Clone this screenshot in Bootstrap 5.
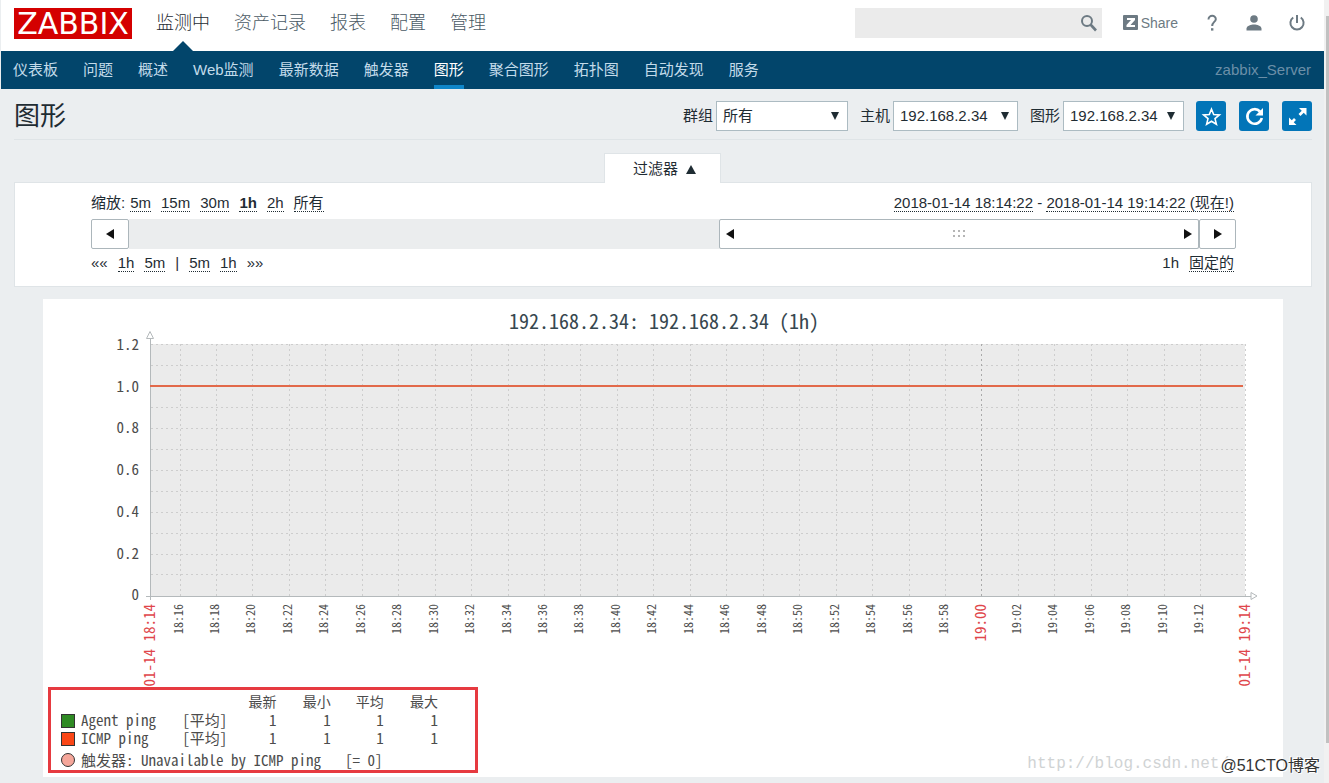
<!DOCTYPE html>
<html lang="zh-CN">
<head>
<meta charset="utf-8">
<meta name="viewport" content="width=device-width, initial-scale=1">
<title>图形</title>
<link rel="stylesheet" href="https://cdn.jsdelivr.net/npm/bootstrap@5.3.0/dist/css/bootstrap.min.css">
<style>
  body { background: #ebeef0; color: #1f2c33; font: 15px/22px "Liberation Sans", "Noto Sans CJK SC", sans-serif; }
  a { color: inherit; text-decoration: none; }
  .z-page { padding-left: 1px; }
  .z-top { height: 51px; padding: 0 18px 0 13px; }
  .z-logo { background: #d40000; color: #fff; font: 30px/31px "DejaVu Sans", sans-serif; width: 118px; height: 31px; margin: 8px 24px 12px 0; text-align: center; }
  .z-main { gap: 24px; font-size: 18px; font-weight: 300; color: #4a5964; height: 51px; line-height: 46px; }
  .z-main .on { color: #1f2c33; position: relative; }
  .z-main .on::after { content: ""; position: absolute; bottom: 0; left: 50%; margin-left: -10px; border: 10px solid transparent; border-top: 0; border-bottom-color: #02456b; }
  .z-search { background: #ebebeb; width: 247px; height: 30px; margin-bottom: 5px; }
  .z-search input { background: none; border: 0; outline: 0; min-width: 0; padding: 0 8px; }
  .z-tools { color: #6d7a83; margin-bottom: 6px; }
  .z-tools svg, .z-search svg { display: block; }
  .z-share { font-size: 14px; gap: 3px; margin: 0 26px 0 21px; }
  .z-icons { gap: 25px; }
  .z-sub { background: #02456b; color: #c3dbea; height: 38px; padding: 0 13px 0 12px; line-height: 38px; }
  .z-sub nav { gap: 25px; }
  .z-sub .on { color: #fff; box-shadow: inset 0 -4px #0f86c9; }
  .z-sub .who { color: #6b8fa8; }
  .z-head { height: 51px; margin: 0 12px 0 13px; border-bottom: 1px solid #dfe4e7; padding-bottom: 4px; padding-top: 8px; }
  .z-head h1 { font-size: 26px; line-height: 38px; font-weight: 400; margin: 0; }
  .z-ctl, .z-acts { gap: 12px; }
  .z-acts { gap: 13px; }
  .z-ctl label { margin-right: 3px; }
  .z-ctl select { appearance: none; height: 30px; border: 1px solid #acbbc2; background: #fff url("data:image/svg+xml,%3Csvg xmlns='http://www.w3.org/2000/svg' width='8' height='8'%3E%3Cpath d='M0 0h8L4 8z' fill='%231f2c33'/%3E%3C/svg%3E") no-repeat right 8px top 10px; padding: 0 6px; color: inherit; border-radius: 0; }
  .w-a { width: 132px; } .w-b { width: 125px; } .w-c { width: 121px; }
  .z-btn { width: 30px; height: 30px; border: 0; border-radius: 3px; background: #0275b8; padding: 0; color: #fff; }
  .z-btn svg { display: block; }
  .z-tab { background: #fff; border: 1px solid #dfe4e7; border-bottom: 0; width: 117px; height: 30px; margin: 13px auto -1px; position: relative; padding: 0 0 0 4px; color: inherit; gap: 8px; }
  .z-filter { background: #fff; border: 1px solid #dfe4e7; margin: 0 12px 0 13px; padding: 9px 75px 12px 76px; }
  .z-links { padding-right: 2px; }
  .z-links a { border-bottom: 1px dotted #1f2c33; }
  .z-links div { white-space: nowrap; }
  .z-links a + a, .z-gap { margin-left: 10px; }
  .z-zoom { margin-right: 5px; }
  .z-slide { height: 30px; margin: 5px 0 3px; }
  .z-slide button { border: 1px solid #acb6bb; border-radius: 2px; background: #fff; padding: 0; width: 38px; }
  .z-slide svg { display: block; }
  .z-slide button:last-child { width: 37px; }
  .z-track { background: #ebedee; }
  .z-thumb { background: #fff; border: 1px solid #acb6bb; border-radius: 2px; padding: 0 6px; }
  .z-chart { background: #fff; margin: 12px 41px 6px 42px; padding-bottom: 4px; }
  .z-chart text, .z-legend { font-family: "Noto Sans Mono CJK SC", "Liberation Mono", "Noto Sans CJK SC", monospace; fill: #4c4c4c; color: #4c4c4c; font-size: 15px; }
  .z-chart svg { display: block; width: 100%; height: auto; }
  .z-chart .ttl { font-size: 20px; fill: #37474f; }
  .z-chart .tick { font-size: 12px; }
  .z-chart .hot { fill: #e0464b; }
  .z-legend { border: 3px solid #e63a40; margin-left: 5px; width: 430px; height: 86px; padding: 3px 0 0 10px; line-height: 18px; }
  .z-legend th, .z-legend td { padding: 0; font-weight: 400; white-space: nowrap; }
  .z-legend table { table-layout: fixed; width: 377px; line-height: 18px; }
  .z-legend thead th { line-height: 17px; font-size: 14px; }
  .z-legend tbody tr { height: 18px; }
  .z-legend td { line-height: 17px; }
  .z-trig { margin-top: 5px; }
  .z-sw { display: inline-block; width: 14px; height: 14px; border: 1px solid #333; vertical-align: -2px; margin-right: 6px; }
  .z-g { background: #2f8a24; } .z-r { background: #fa4616; } .z-p { background: #f5a69a; border-radius: 50%; }
  .z-bar { width: 5px; background: #f1f1f1; padding: 16px 0 40px 2px; }
  .z-bar div { background: #c1c1c1; height: 100%; }
  .z-wm1, .z-wm2 { position: absolute; white-space: nowrap; pointer-events: none; }
  .z-wm1 { right: 100px; bottom: 8px; font: 16px/22px "Liberation Mono", monospace; color: #d0d3d4; }
  .z-wm2 { right: 9px; bottom: 6px; font-size: 16px; color: #333; text-shadow: 1px 1px #fff, -1px -1px #fff; }
</style>
<script src="https://cdn.jsdelivr.net/npm/bootstrap@5.3.0/dist/js/bootstrap.bundle.min.js"></script>
</head>
<body>
<div class="d-flex min-vh-100 position-relative">
  <div class="z-page flex-grow-1">
    <header class="z-top bg-white d-flex align-items-center">
      <a href="#" class="z-logo">ZABBIX</a>
      <nav class="z-main d-flex text-nowrap">
        <a href="#" class="on">监测中</a><a href="#">资产记录</a><a href="#">报表</a><a href="#">配置</a><a href="#">管理</a>
      </nav>
      <form class="z-search d-flex align-items-center ms-auto">
        <input type="search" class="flex-grow-1" aria-label="搜索">
        <button class="btn p-0 border-0 me-1" type="button" aria-label="搜索"><svg width="20" height="20" fill="none" stroke="#6d7a83" stroke-width="2"><circle cx="9" cy="8" r="5"/><path d="M12.500 11.500l5.500 6" stroke-width="2.600"/></svg></button>
      </form>
      <div class="z-tools d-flex align-items-center">
        <a href="#" class="z-share d-flex align-items-center"><svg width="15" height="15"><rect width="15" height="15" rx="1" fill="#6d7a83"/><path d="M4 3h8v2L7.500 10H12v2H3.500v-2L8 5H4z" fill="#fff"/></svg>Share</a>
        <div class="z-icons d-flex align-items-center">
          <a href="#" aria-label="帮助"><svg width="16" height="18" fill="none" stroke="currentColor" stroke-width="2"><path d="M4.500 5.500C4.500 0.500 12 0.800 11.800 5.200C11.600 8 8.200 8 8.200 12"/><path d="M7 14.200h2.400v2.400H7z" fill="currentColor" stroke="none"/></svg></a>
          <a href="#" aria-label="用户"><svg width="18" height="18" fill="currentColor"><circle cx="9" cy="5" r="3.800"/><path d="M1.500 16.500v-2C2 11.500 6 10.500 9 10.500s7 1 7.500 4v2z"/></svg></a>
          <a href="#" aria-label="退出"><svg width="18" height="18" fill="none" stroke="currentColor" stroke-width="2"><path d="M9 1v8M5.200 3.500a6.600 6.600 0 1 0 7.600 0"/></svg></a>
        </div>
      </div>
    </header>
    <div class="z-sub d-flex justify-content-between text-nowrap">
      <nav class="d-flex">
        <a href="#">仪表板</a><a href="#">问题</a><a href="#">概述</a><a href="#">Web监测</a><a href="#">最新数据</a><a href="#">触发器</a><a href="#" class="on">图形</a><a href="#">聚合图形</a><a href="#">拓扑图</a><a href="#">自动发现</a><a href="#">服务</a>
      </nav>
      <span class="who">zabbix_Server</span>
    </div>
    <div class="z-head d-flex justify-content-between align-items-center text-nowrap">
      <h1>图形</h1>
      <form class="z-ctl d-flex align-items-center">
        <div class="d-flex align-items-center"><label for="g">群组</label><select id="g" class="w-a"><option>所有</option></select></div>
        <div class="d-flex align-items-center"><label for="h">主机</label><select id="h" class="w-b"><option>192.168.2.34</option></select></div>
        <div class="d-flex align-items-center"><label for="p">图形</label><select id="p" class="w-c"><option>192.168.2.34</option></select></div>
        <div class="z-acts d-flex">
          <button type="button" class="z-btn" aria-label="收藏"><svg width="30" height="30" fill="none" stroke="#fff" stroke-width="1.600"><path d="M15.500 8.200l2.200 5.300 5.700.4-4.400 3.700 1.400 5.600-4.900-3-4.900 3 1.400-5.600-4.400-3.700 5.700-.4z"/></svg></button>
          <button type="button" class="z-btn" aria-label="刷新"><svg width="30" height="30" fill="none" stroke="#fff" stroke-width="2.600"><path d="M21 10.500a7.300 7.300 0 1 0 1.800 6.500"/><path d="M24 7v7.500h-7.500z" fill="#fff" stroke="none"/></svg></button>
          <button type="button" class="z-btn" aria-label="全屏"><svg width="30" height="30" fill="#fff"><path d="M17 7h7.500v7.500z M7 16.500v7.500h7.500z"/><path d="M22 9.500l-4.500 4.500M9.500 21.500l3.500-3.500" stroke="#fff" stroke-width="2.800"/></svg></button>
        </div>
      </form>
    </div>
    <button type="button" class="z-tab d-flex align-items-center justify-content-center">过滤器<svg width="10" height="11"><path d="M0 11h10L5 2z" fill="#1f2c33"/></svg></button>
    <section class="z-filter">
      <div class="z-links d-flex justify-content-between">
        <div><span class="z-zoom">缩放:</span><a href="#">5m</a><a href="#">15m</a><a href="#">30m</a><a href="#" class="fw-bold">1h</a><a href="#">2h</a><a href="#">所有</a></div>
        <div><a href="#">2018-01-14 18:14:22</a> - <a href="#" class="ms-0">2018-01-14 19:14:22 (现在!)</a></div>
      </div>
      <div class="z-slide d-flex">
        <button type="button" class="d-flex align-items-center justify-content-center" aria-label="向前"><svg width="8" height="10"><path d="M8 0v10L0 5z" fill="#111"/></svg></button>
        <div class="z-track flex-grow-1 d-flex justify-content-end">
          <div class="z-thumb d-flex align-items-center justify-content-between" style="width:44.86%">
            <svg width="8" height="10"><path d="M8 0v10L0 5z" fill="#111"/></svg>
            <svg width="12" height="8" fill="#b5b5b5"><path d="M0 0h2v2H0zM5 0h2v2H5zM10 0h2v2h-2zM0 5h2v2H0zM5 5h2v2H5zM10 5h2v2h-2z"/></svg>
            <svg width="8" height="10"><path d="M0 0v10l8-5z" fill="#111"/></svg>
          </div>
        </div>
        <button type="button" class="d-flex align-items-center justify-content-center" aria-label="向后"><svg width="8" height="10"><path d="M0 0v10l8-5z" fill="#111"/></svg></button>
      </div>
      <div class="z-links d-flex justify-content-between">
        <div>««<a href="#" class="z-gap">1h</a><a href="#">5m</a><span class="z-gap">|</span><a href="#" class="z-gap">5m</a><a href="#">1h</a><span class="z-gap">»»</span></div>
        <div>1h<a href="#" class="z-gap">固定的</a></div>
      </div>
    </section>
    <section class="z-chart">
      <svg viewBox="0 0 1240 388" role="img" aria-label="192.168.2.34 (1h)">
        <rect x="107" y="45" width="1095" height="252" fill="#ebebeb"/>
        <g id="grid" stroke="#cdcdcd" stroke-dasharray="2 3" shape-rendering="crispEdges"></g>
        <path d="M107 38V301M103 297H1208" stroke="#b4b9bb" fill="none" shape-rendering="crispEdges"/>
        <path d="M103.500 39.500h7l-3.500-7zM1208 293.500v7l6-3.500z" stroke="#b4b9bb" fill="#fff"/>
        <path d="M107 87H1200" stroke="#e2694a" stroke-width="2"/>
        <text class="ttl" x="621" y="30" text-anchor="middle">192.168.2.34: 192.168.2.34 (1h)</text>
        <g id="labels"></g>
      </svg>
      <div class="z-legend">
        <table>
          <colgroup><col style="width:121px"><col style="width:44px"><col style="width:50px"><col style="width:54px"><col style="width:53px"><col style="width:54px"></colgroup>
          <thead><tr><th></th><th></th><th class="text-end">最新</th><th class="text-end">最小</th><th class="text-end">平均</th><th class="text-end">最大</th></tr></thead>
          <tbody>
            <tr><td><span class="z-sw z-g"></span>Agent ping</td><td>[平均]</td><td class="text-end">1</td><td class="text-end">1</td><td class="text-end">1</td><td class="text-end">1</td></tr>
            <tr><td><span class="z-sw z-r"></span>ICMP ping</td><td>[平均]</td><td class="text-end">1</td><td class="text-end">1</td><td class="text-end">1</td><td class="text-end">1</td></tr>
          </tbody>
        </table>
        <div class="z-trig d-flex align-items-center"><span class="z-sw z-p"></span><span>触发器: Unavailable by ICMP ping</span><span class="ms-4">[= 0]</span></div>
      </div>
    </section>
  </div>
  <div class="z-bar flex-shrink-0 align-self-stretch"><div></div></div>
  <span class="z-wm1">http://blog.csdn.net/</span>
  <span class="z-wm2">@51CTO博客</span>
</div>
<script>
  // Grid lines and axis labels of the one-hour graph
  let grid = '', labels = '';
  for (let i = 0; i < 12; i++) {
    const y = Math.round(45 + i * 20.95) + 0.5;
    grid += `<path d="M108 ${y}H1202"/>`;
  }
  ['1.2', '1.0', '0.8', '0.6', '0.4', '0.2', '0'].forEach((t, i) => {
    labels += `<text x="96" y="${Math.round(51 + i * 41.7)}" text-anchor="end">${t}</text>`;
  });
  const upright = (x, t, c) => `<text class="${c}" text-anchor="end" transform="translate(${x} 305) rotate(-90)">${t}</text>`;
  for (let i = 0; i < 29; i++) {
    const m = 16 + i * 2, x = Math.round(136.5 + i * 36.45), full = m === 60;
    const t = full ? '19:00' : (m < 60 ? '18:' + m : '19:' + String(m - 60).padStart(2, '0'));
    grid += `<path d="M${x}.5 45V297"${full ? ' stroke="#a9a9a9"' : ''}/>`;
    labels += upright(x + (full ? 5 : 3), t, full ? 'hot' : 'tick');
  }
  grid += '<path d="M1202.5 45V297"/>';
  labels += upright(112, '01-14 18:14', 'hot') + upright(1207, '01-14 19:14', 'hot');
  document.getElementById('grid').innerHTML = grid;
  document.getElementById('labels').innerHTML = labels;
</script>
</body>
</html>
